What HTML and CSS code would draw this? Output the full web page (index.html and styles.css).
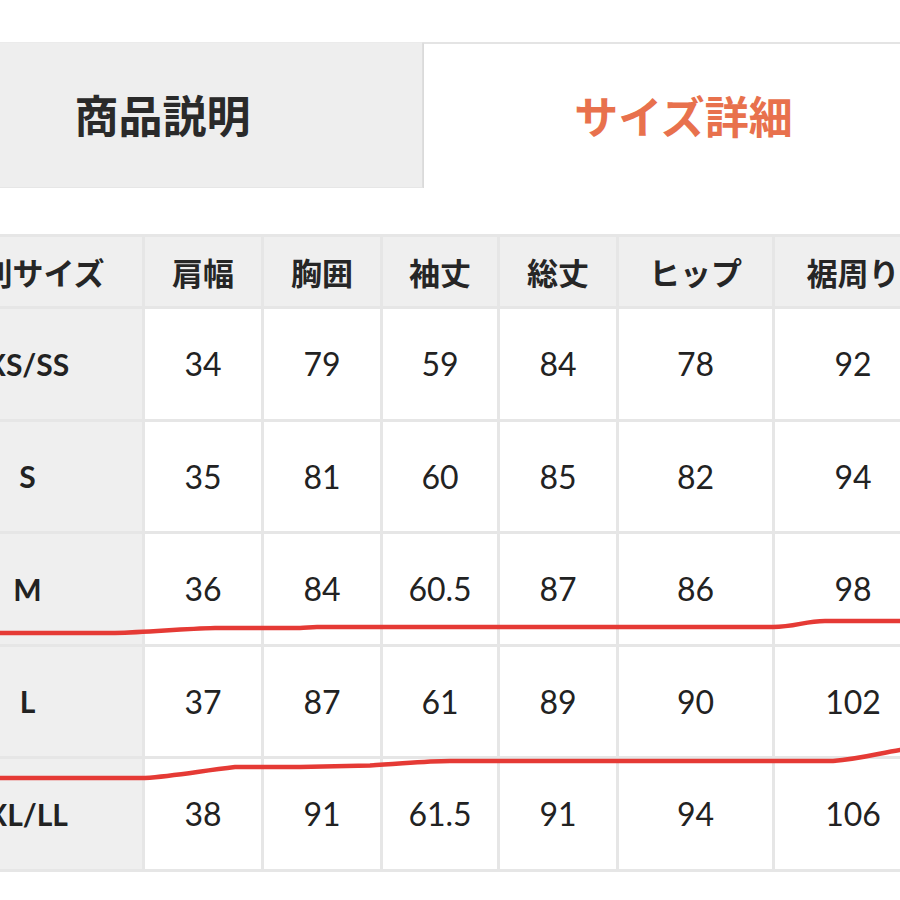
FILE: index.html
```html
<!DOCTYPE html>
<html lang="ja">
<head>
<meta charset="utf-8">
<title>サイズ詳細</title>
<link rel="stylesheet" href="styles.css">
</head>
<body>
<div class="page">
  <div class="tabs">
    <div class="tab tab-inactive">商品説明</div>
    <div class="tab tab-active">サイズ詳細</div>
  </div>
  <table class="size-table">
    <colgroup>
      <col class="c-size">
      <col class="c-116">
      <col class="c-116">
      <col class="c-114">
      <col class="c-116">
      <col class="c-153">
      <col class="c-156">
    </colgroup>
    <thead>
      <tr>
        <th>国別サイズ</th>
        <th>肩幅</th>
        <th>胸囲</th>
        <th>袖丈</th>
        <th>総丈</th>
        <th>ヒップ</th>
        <th>裾周り</th>
      </tr>
    </thead>
    <tbody>
      <tr><th>XS/SS</th><td>34</td><td>79</td><td>59</td><td>84</td><td>78</td><td>92</td></tr>
      <tr><th>S</th><td>35</td><td>81</td><td>60</td><td>85</td><td>82</td><td>94</td></tr>
      <tr><th>M</th><td>36</td><td>84</td><td>60.5</td><td>87</td><td>86</td><td>98</td></tr>
      <tr><th>L</th><td>37</td><td>87</td><td>61</td><td>89</td><td>90</td><td>102</td></tr>
      <tr><th>XL/LL</th><td>38</td><td>91</td><td>61.5</td><td>91</td><td>94</td><td>106</td></tr>
    </tbody>
  </table>
</div>
<svg class="marks" width="900" height="900" viewBox="0 0 900 900" aria-hidden="true">
  <path d="M0 633 L115 633 C150 632 180 629 215 628 L300 628 C306 628 310 627 317 627 L773 627 C795 627 805 621 825 621 L900 621" />
  <path d="M0 778 L145 778 C175 776 200 771 235 767 L300 767 L370 765.5 C400 764 425 761 450 761 L833 761 C860 759 880 753 900 750" />
</svg>
</body>
</html>
```
FILE: styles.css
```css
html, body {
  margin: 0;
  padding: 0;
  background: #ffffff;
}

body {
  width: 900px;
  height: 900px;
  overflow: hidden;
  position: relative;
  font-family: "Noto Sans CJK JP", "Noto Sans", sans-serif;
  color: #262626;
}

.page {
  margin-left: -97px;
  width: 1040px;
}

.tabs {
  margin-top: 42px;
  height: 146px;
  display: flex;
}

.tab {
  flex: 1;
  display: flex;
  align-items: center;
  justify-content: center;
  font-family: "Noto Sans CJK JP", sans-serif;
  font-weight: 700;
  font-size: 44px;
  padding-bottom: 2px;
  box-sizing: border-box;
}

.tab-inactive {
  background: #eeeeee;
  color: #2a2a2a;
  border-top: 1px solid #ebebeb;
  border-bottom: 1px solid #e6e6e6;
  border-right: 1px solid #dedede;
}

.tab-active {
  background: #ffffff;
  color: #e8714d;
  border-top: 2px solid #e4e4e4;
  border-left: 1px solid #dadada;
}

.size-table {
  margin-top: 46px;
  margin-left: 7px;
  width: 1024px;
  table-layout: fixed;
  border-collapse: separate;
  border-spacing: 3px;
  background: #e6e6e6;
}

.c-size { width: 229px; }
.c-116 { width: 116px; }
.c-114 { width: 114px; }
.c-153 { width: 153px; }
.c-156 { width: 156px; }

.size-table th,
.size-table td {
  padding: 0;
  text-align: center;
  vertical-align: middle;
  white-space: nowrap;
}

.size-table thead th {
  height: 69px;
  background: #efefef;
  font-family: "Noto Sans CJK JP", sans-serif;
  font-weight: 700;
  font-size: 31px;
  color: #262626;
}

.size-table tbody th {
  height: 109.5px;
  background: #efefef;
  font-family: Lato, "Noto Sans", sans-serif;
  font-weight: 700;
  font-size: 30px;
  color: #222222;
}

.size-table tbody td {
  height: 109.5px;
  background: #ffffff;
  font-family: Lato, "Noto Sans", sans-serif;
  font-weight: 400;
  font-size: 32px;
  color: #222222;
}

.marks {
  position: absolute;
  left: 0;
  top: 0;
  pointer-events: none;
}

.marks path {
  fill: none;
  stroke: #e53a35;
  stroke-width: 4.5;
  stroke-linecap: round;
  stroke-linejoin: round;
}
```
